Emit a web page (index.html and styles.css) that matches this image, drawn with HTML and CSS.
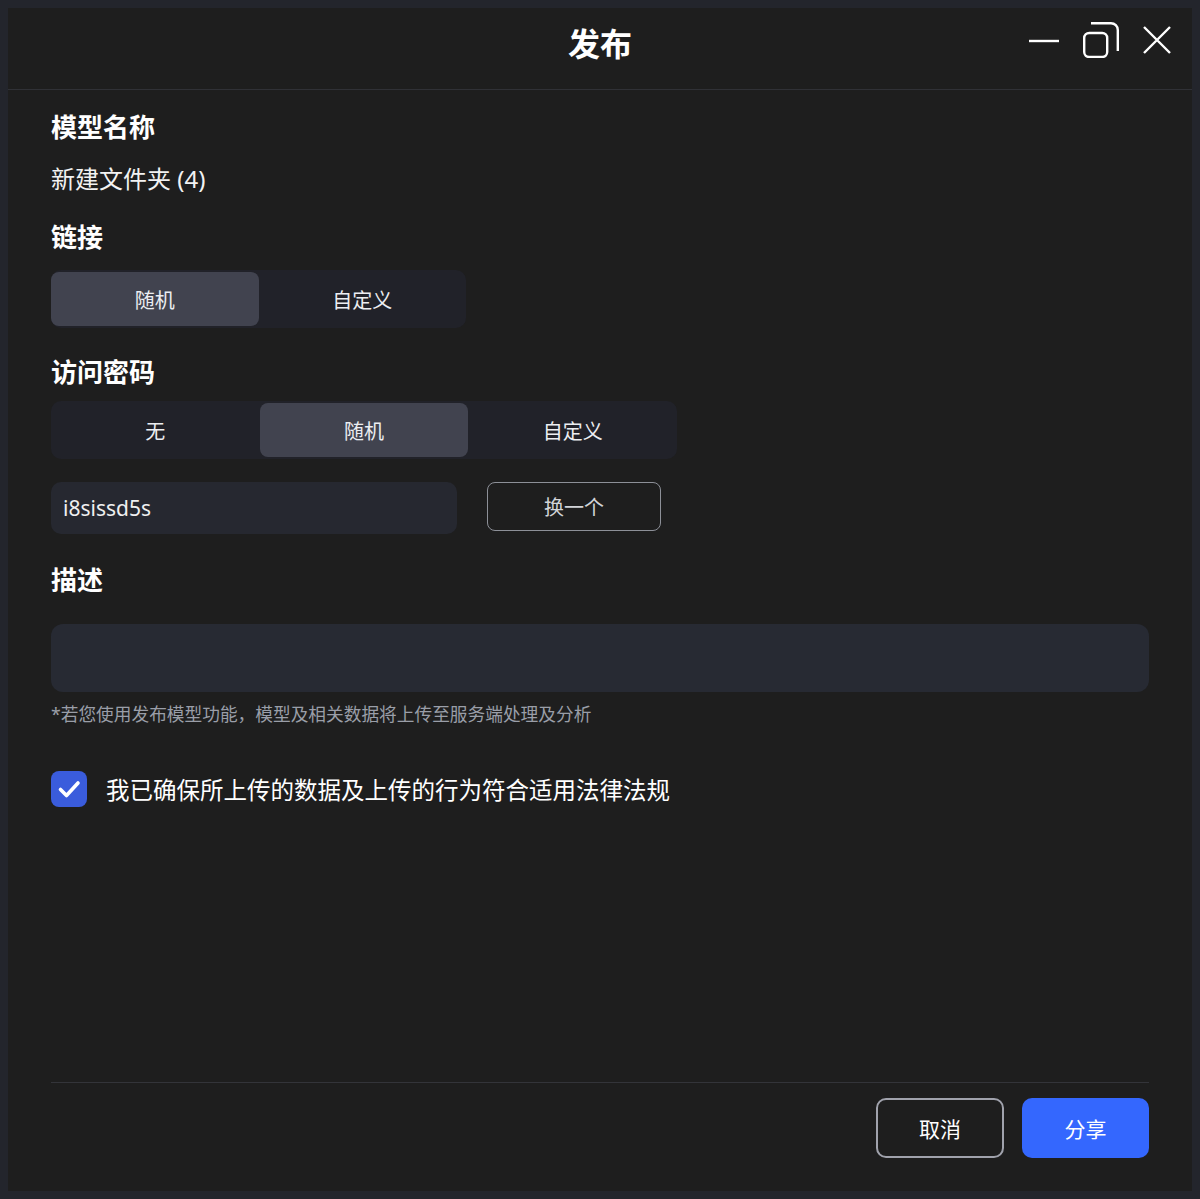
FILE: index.html
```html
<!DOCTYPE html>
<html lang="zh-CN">
<head>
    <meta charset="UTF-8">
    <meta name="viewport" content="width=device-width, initial-scale=1.0">
    <title>发布</title>
    <link rel="stylesheet" href="styles.css">
</head>
<body>

    <div class="dialog">
        <div class="titlebar">
            <div></div>
            <div class="title">发布</div>
            <div class="controls">
                <svg class="ctl" width="30" height="30" viewBox="0 0 30 30">
                    <line x1="0" y1="16" x2="30" y2="16" stroke="#fff" stroke-width="2.4"/>
                </svg>
                <svg class="ctl" width="36" height="36" viewBox="0 0 36 36">
                    <rect x="1.2" y="11" width="23" height="24" rx="5" fill="none" stroke="#fff" stroke-width="2.4"/>
                    <path d="M8 1.2 H28 A6.8 6.8 0 0 1 34.8 8 V29" fill="none" stroke="#fff" stroke-width="2.4"/>
                </svg>
                <svg class="ctl" width="28" height="28" viewBox="0 0 28 28">
                    <path d="M1 1 L27 27 M27 1 L1 27" stroke="#fff" stroke-width="2.4"/>
                </svg>
            </div>
        </div>

        <div class="content">
            <h3 class="label first">模型名称</h3>
            <div class="name">新建文件夹 (4)</div>

            <h3 class="label link-label">链接</h3>
            <div class="segment seg-link">
                <div class="seg-item active">随机</div>
                <div class="seg-item">自定义</div>
            </div>

            <h3 class="label pwd-label">访问密码</h3>
            <div class="segment seg-pwd">
                <div class="seg-item">无</div>
                <div class="seg-item active">随机</div>
                <div class="seg-item">自定义</div>
            </div>

            <div class="pwd-row">
                <div class="pwd-input">i8sissd5s</div>
                <button class="btn-change">换一个</button>
            </div>

            <h3 class="label desc-label">描述</h3>
            <div class="desc-box"></div>
            <p class="note">*若您使用发布模型功能，模型及相关数据将上传至服务端处理及分析</p>

            <label class="agree">
                <span class="checkbox">
                    <svg width="36" height="36" viewBox="0 0 36 36">
                        <path d="M9.5 18.5 L15.5 24.5 L27 12" fill="none" stroke="#fff" stroke-width="3.6" stroke-linecap="round" stroke-linejoin="round"/>
                    </svg>
                </span>
                <span>我已确保所上传的数据及上传的行为符合适用法律法规</span>
            </label>

            <div class="footer">
                <button class="btn btn-cancel">取消</button>
                <button class="btn btn-share">分享</button>
            </div>
        </div>
    </div>

</body>
</html>
```

FILE: styles.css
```css
body {
    margin: 0;
    padding: 8px;
    background-color: #23252c;
    font-family: "Noto Sans", "Noto Sans CJK SC", sans-serif;
    color: #fff;
}

.dialog {
    width: 1184px;
    height: 1183px;
    background: #1e1e1e;
    display: flex;
    flex-direction: column;
}

/* title bar */
.titlebar {
    height: 81px;
    display: grid;
    grid-template-columns: 1fr auto 1fr;
    border-bottom: 1px solid #303136;
}

.title {
    font-size: 32px;
    font-weight: 700;
    line-height: 40px;
    margin-top: 16px;
}

.controls {
    justify-self: end;
    display: flex;
    align-items: center;
    gap: 24px;
    margin-top: 14px;
    padding-right: 21px;
    height: 36px;
}

.ctl {
    display: block;
}

/* body */
.content {
    flex: 1;
    display: flex;
    flex-direction: column;
    padding: 0 43px;
}

.label {
    margin: 0;
    font-size: 26px;
    font-weight: 700;
    line-height: 34px;
}

.first { margin-top: 20px; }
.link-label { margin-top: 25px; }
.pwd-label { margin-top: 27px; }
.desc-label { margin-top: 29px; }

.name {
    margin-top: 19px;
    font-size: 24px;
    line-height: 32px;
    color: #f2f2f2;
}

.segment {
    display: flex;
    align-self: flex-start;
    background: #212229;
    border-radius: 10px;
    padding: 2px 0;
}

.seg-link { margin-top: 16px; width: 415px; }
.seg-pwd { margin-top: 12px; width: 626px; }

.seg-item {
    flex: 1;
    height: 54px;
    display: flex;
    align-items: center;
    justify-content: center;
    font-size: 20px;
    color: #eceef2;
    border-radius: 8px;
}

.seg-item.active {
    background: #41434f;
}

.pwd-row {
    margin-top: 23px;
    display: flex;
    align-items: flex-start;
    gap: 30px;
}

.pwd-input {
    width: 394px;
    height: 52px;
    padding-left: 12px;
    background: #262830;
    border-radius: 10px;
    font-size: 21px;
    line-height: 52px;
    color: #f0f0f0;
}

.btn-change {
    width: 174px;
    height: 49px;
    background: transparent;
    border: 1px solid #8d9098;
    border-radius: 8px;
    font-family: inherit;
    font-size: 20px;
    color: #d2d4d8;
    cursor: pointer;
}

.desc-box {
    margin-top: 27px;
    height: 68px;
    background: #272a33;
    border-radius: 12px;
}

.note {
    margin: 10px 0 0;
    font-size: 17.7px;
    line-height: 24px;
    color: #9a9ea8;
}

.agree {
    margin-top: 45px;
    display: flex;
    align-items: center;
    gap: 19px;
    font-size: 23.5px;
    color: #fff;
}

.checkbox {
    width: 36px;
    height: 36px;
    border-radius: 8px;
    background: #3a5cdc;
}

.checkbox svg {
    display: block;
}

/* footer */
.footer {
    margin-top: auto;
    border-top: 1px solid #333439;
    padding: 15px 0 33px;
    display: flex;
    justify-content: flex-end;
    gap: 18px;
}

.btn {
    width: 128px;
    height: 60px;
    border-radius: 10px;
    font-family: inherit;
    font-size: 21px;
    color: #fff;
    cursor: pointer;
}

.btn-cancel {
    background: transparent;
    border: 2px solid #a0a2ac;
}

.btn-share {
    width: 127px;
    background: #3467fe;
    border: none;
}
```
